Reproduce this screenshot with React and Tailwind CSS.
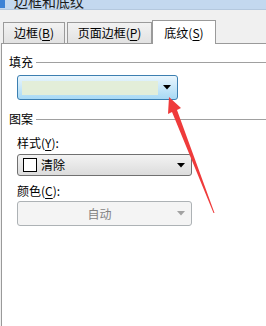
import React from 'react'

const FONT = "font-['Microsoft_YaHei','Noto_Sans_CJK_SC',sans-serif]"

function Caret({ color = '#000', className = '' }) {
  return (
    <svg width="8" height="5" viewBox="0 0 8 5" className={className}>
      <path d="M0 0H8L4 4.5Z" fill={color} />
    </svg>
  )
}

function GroupHeader({ label, className = '' }) {
  return (
    <div className={`flex items-center h-[16px] pl-[7px] ${className}`}>
      <span className="leading-[16px] text-black">{label}</span>
      <div className="flex-1 h-px bg-[#a0a0a0] ml-[3px]" />
    </div>
  )
}

function Tab({ label, hotkey, active, className = '' }) {
  const base = active
    ? 'h-[24px] -mb-px bg-white relative z-10'
    : 'h-[21px] bg-gradient-to-b from-[#f2f2f2] to-[#e2e2e2]'
  return (
    <div
      className={`flex items-center justify-center border border-b-0 border-[#9a9a9a] leading-none ${base} ${className}`}
    >
      <span>
        {label}(<span className="underline underline-offset-2">{hotkey}</span>)
      </span>
    </div>
  )
}

export default function App() {
  return (
    <div className={`relative w-[266px] h-[326px] overflow-hidden bg-[#f0f0f0] text-[12px] text-black ${FONT}`}>
      {/* title bar, its top is off the screen */}
      <div className="h-[10px] bg-[#c3d8ef] border-b border-[#b4c8de] flex items-start overflow-hidden">
        <div className="w-[5px] h-[8px] bg-[#3b82d6]" />
        <span className="ml-[9px] text-[14px] leading-[14px] -mt-[6px] text-[#1b1b1b]">边框和底纹</span>
      </div>
      <div className="h-[9px]" />

      {/* tabs */}
      <div className="flex items-end h-[24px] pl-[3px]">
        <Tab label="边框" hotkey="B" className="w-[62px]" />
        <Tab label="页面边框" hotkey="P" className="w-[85px] ml-[2px]" />
        <Tab label="底纹" hotkey="S" active className="w-[64px]" />
      </div>

      {/* panel */}
      <div className="ml-px h-[283px] bg-white border-l border-t border-[#9a9a9a]">
        <GroupHeader label="填充" className="mt-[10px]" />
        <div className="ml-[15px] mt-[5px] w-[161px] h-[25px] rounded-[3px] border border-[#3c7fb1] bg-gradient-to-b from-[#eaf6fd] to-[#a7d9f5] flex items-center pl-[4px] pr-[6px]">
          <div className="w-[136px] h-[14px] bg-[#e3eed9]" />
          <div className="flex-1 flex justify-end">
            <Caret />
          </div>
        </div>

        <GroupHeader label="图案" className="mt-[11px]" />
        <div className="ml-[15px] mt-[8px] leading-[16px]">
          样式(<span className="underline underline-offset-2">Y</span>):
        </div>
        <div className="ml-[15px] mt-[3px] w-[175px] h-[22px] rounded-[3px] border border-[#707070] bg-gradient-to-b from-[#f3f3f3] to-[#dcdcdc] flex items-center pl-[5px] pr-[6px]">
          <div className="w-[14px] h-[14px] border border-black bg-white" />
          <span className="ml-[4px] leading-none">清除</span>
          <div className="flex-1 flex justify-end">
            <Caret />
          </div>
        </div>
        <div className="ml-[15px] mt-[7px] leading-[16px]">
          颜色(<span className="underline underline-offset-2">C</span>):
        </div>
        <div className="ml-[15px] mt-[2px] w-[175px] h-[25px] rounded-[3px] border border-[#adb2b5] bg-[#f4f4f4] flex items-center pr-[6px]">
          <span className="flex-1 text-center text-[#838383] leading-none pl-[4px]">自动</span>
          <Caret color="#a2a2a2" />
        </div>
      </div>

      {/* annotation arrow */}
      <svg className="absolute left-0 top-0 pointer-events-none" width="266" height="326" viewBox="0 0 266 326">
        <polygon
          points="169,97 181,108 177,110 214.5,213 213.5,213 172,112 168,114"
          fill="#ef3b3b"
        />
      </svg>
    </div>
  )
}
